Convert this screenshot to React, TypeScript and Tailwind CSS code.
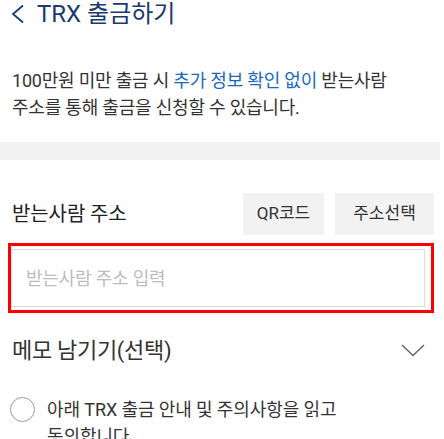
export default function App() {
  return (
    <div className="w-[444px] h-[439px] overflow-hidden bg-white font-['Roboto','Noto_Sans_CJK_KR',sans-serif] text-[#222]">
      <div className="w-[440px]">
        {/* header */}
        <div className="flex items-center h-[28px] pl-[10px]">
          <svg width="16" height="20" viewBox="0 0 16 20" className="mr-[11px]">
            <path d="M13 1.5 L3 10 L13 18.5" fill="none" stroke="#1b3a6b" strokeWidth="1.8" />
          </svg>
          <h1 className="text-[24px] leading-none text-[#1b3a6b]">TRX 출금하기</h1>
        </div>

        {/* intro */}
        <p className="mt-[39px] px-[12px] text-[18px] leading-[27px] text-[#333] tracking-[-0.2px]">
          100만원 미만 출금 시 <span className="text-[#1a67c2]">추가 정보 확인 없이</span> 받는사람
          <br />
          주소를 통해 출금을 신청할 수 있습니다.
        </p>

        <div className="mt-[21px] h-[18px] bg-[#f2f2f2]" />

        {/* address */}
        <div className="flex items-center justify-between mt-[33px] pl-[12px] pr-[6px]">
          <span className="text-[20px] text-[#222] tracking-[-0.1px]">받는사람 주소</span>
          <div className="flex gap-[11px]">
            <button className="w-[81px] h-[42px] bg-[#f2f2f2] text-[17px] text-[#333]">QR코드</button>
            <button className="w-[99px] h-[42px] bg-[#f2f2f2] text-[17px] text-[#333]">주소선택</button>
          </div>
        </div>

        <div className="mt-[8px] ml-[8px] w-[426px] h-[70px] border-[3px] border-[#ff0000] pt-[3px] pr-[6px]">
          <div className="h-[58px] border border-[#dddddd] flex items-center pl-[14px]">
            <span className="text-[18px] text-[#bdbdbd] tracking-[-0.2px]">받는사람 주소 입력</span>
          </div>
        </div>

        {/* memo */}
        <div className="flex items-center justify-between h-[48px] mt-[13px] pl-[12px] pr-[15px]">
          <span className="text-[22px] text-[#333] tracking-[-0.3px]">메모 남기기(선택)</span>
          <svg width="24" height="13" viewBox="0 0 24 13">
            <path d="M1 1 L12 11.5 L23 1" fill="none" stroke="#666" strokeWidth="1.5" />
          </svg>
        </div>

        {/* agree */}
        <div className="flex mt-[22px] pl-[10px]">
          <span className="shrink-0 w-[25px] h-[25px] rounded-full border-[1.5px] border-[#999] mt-[1px] mr-[12px]" />
          <p className="text-[18px] leading-[27px] text-[#333] tracking-[-0.1px]">
            아래 TRX 출금 안내 및 주의사항을 읽고
            <br />
            동의합니다
          </p>
        </div>
      </div>
    </div>
  );
}
